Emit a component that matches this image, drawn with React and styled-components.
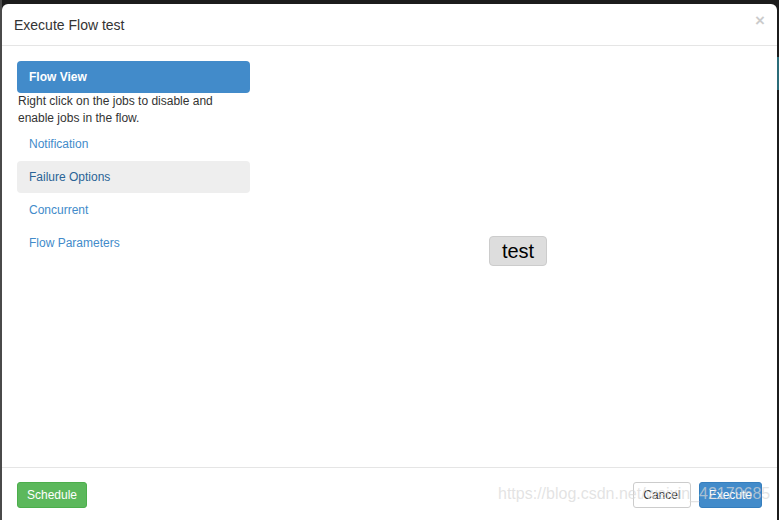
import React from 'react';
import styled, { createGlobalStyle } from 'styled-components';

const GlobalStyle = createGlobalStyle`
  html, body {
    margin: 0;
    padding: 0;
    height: 520px;
    overflow: hidden;
  }
  body {
    font-family: "Liberation Sans", Arial, sans-serif;
    background:
      linear-gradient(to bottom, transparent 0 57px, #2b6c78 57px 90px, transparent 90px) right top / 3px 100% no-repeat,
      linear-gradient(to right, #4a4a4a 0 2px, #1c1c1c 2px);
  }
`;

const Backdrop = styled.div`
  padding: 4px 2px 0 2px;
  height: 520px;
  box-sizing: border-box;
  position: relative;
`;

const Modal = styled.div`
  width: 775px;
  height: 540px;
  background: #fff;
  border-radius: 6px 6px 0 0;
  display: flex;
  flex-direction: column;
`;

const Header = styled.div`
  height: 41px;
  padding: 0 12px;
  display: flex;
  align-items: center;
  justify-content: space-between;
  border-bottom: 1px solid #e5e5e5;
`;

const Title = styled.h4`
  margin: 0;
  font-size: 14px;
  font-weight: normal;
  color: #333;
`;

const Close = styled.button`
  border: 0;
  background: none;
  padding: 0;
  margin-top: -8px;
  font-family: "Liberation Sans", Arial, sans-serif;
  font-size: 17px;
  font-weight: bold;
  color: #000;
  opacity: 0.2;
  line-height: 1;
`;

const Body = styled.div`
  height: 391px;
  padding: 15px;
  display: flex;
`;

const Sidebar = styled.div`
  width: 233px;
  display: flex;
  flex-direction: column;
`;

const NavItem = styled.div`
  height: 32px;
  box-sizing: border-box;
  padding: 7px 12px;
  margin-top: ${p => (p.$first ? 0 : 1)}px;
  border-radius: 4px;
  font-size: 12px;
  line-height: 18px;
  font-weight: ${p => (p.$active ? 'bold' : 'normal')};
  color: ${p => (p.$active ? '#fff' : p.$hover ? '#2a6496' : '#428bca')};
  background: ${p => (p.$active ? '#428bca' : p.$hover ? '#eee' : 'transparent')};
`;

const Hint = styled.p`
  margin: 0 0 0 1px;
  font-size: 12px;
  line-height: 17px;
  color: #333;
`;

const Graph = styled.div`
  flex: 1;
  position: relative;
`;

const Node = styled.div`
  position: absolute;
  left: 239px;
  top: 175px;
  width: 58px;
  height: 30px;
  box-sizing: border-box;
  display: flex;
  align-items: center;
  justify-content: center;
  background: #ddd;
  border: 1px solid #ccc;
  border-radius: 4px;
  font-size: 20px;
  color: #000;
`;

const Footer = styled.div`
  border-top: 1px solid #e5e5e5;
  padding: 14px 15px 0 15px;
  display: flex;
  align-items: center;
`;

const Spacer = styled.div`
  flex: 1;
`;

const Button = styled.button`
  font-family: "Liberation Sans", Arial, sans-serif;
  font-size: 12px;
  line-height: 16px;
  padding: 4px 9px;
  border-radius: 3px;
  border: 1px solid ${p => p.$border};
  background: ${p => p.$bg};
  color: ${p => p.$color};
  margin-left: ${p => p.$gap || 0}px;
`;

const Watermark = styled.div`
  position: absolute;
  left: 498px;
  top: 485px;
  font-size: 16px;
  line-height: 18px;
  color: rgba(215, 215, 215, 0.7);
  pointer-events: none;
  white-space: nowrap;
`;

export default function App() {
  return (
    <>
      <GlobalStyle />
      <Backdrop>
        <Modal>
          <Header>
            <Title>Execute Flow test</Title>
            <Close>×</Close>
          </Header>
          <Body>
            <Sidebar>
              <NavItem $first $active>Flow View</NavItem>
              <Hint>Right click on the jobs to disable and enable jobs in the flow.</Hint>
              <NavItem>Notification</NavItem>
              <NavItem $hover>Failure Options</NavItem>
              <NavItem>Concurrent</NavItem>
              <NavItem>Flow Parameters</NavItem>
            </Sidebar>
            <Graph>
              <Node>test</Node>
            </Graph>
          </Body>
          <Footer>
            <Button $bg="#5cb85c" $border="#4cae4c" $color="#fff">Schedule</Button>
            <Spacer />
            <Button $bg="#fff" $border="#ccc" $color="#333">Cancel</Button>
            <Button $bg="#428bca" $border="#357ebd" $color="#fff" $gap={8}>Execute</Button>
          </Footer>
        </Modal>
        <Watermark>https://blog.csdn.net/weixin_42179685</Watermark>
      </Backdrop>
    </>
  );
}
